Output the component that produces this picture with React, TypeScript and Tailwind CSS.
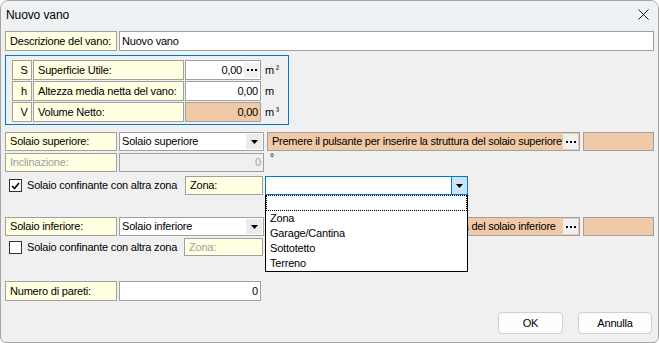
import React from 'react'

const LABEL = 'flex items-center shrink-0 h-full border border-[#a0a0a0] bg-[#ffffe1] pl-[4px] whitespace-nowrap overflow-hidden'
const INPUT = 'flex items-center h-full border border-[#a0a0a0] bg-white'
const ORANGE = 'flex items-center h-full border border-[#a0a0a0] bg-[#f0c9a6]'

function Dots() {
  return (
    <span className="flex items-center justify-center w-[15px] h-[15px] my-auto mr-[1px] bg-[#f0f0f0] shrink-0">
      <svg width="10" height="2" viewBox="0 0 10 2">
        <rect x="0" y="0" width="2" height="2" fill="#000" />
        <rect x="4" y="0" width="2" height="2" fill="#000" />
        <rect x="8" y="0" width="2" height="2" fill="#000" />
      </svg>
    </span>
  )
}

function Arrow() {
  return (
    <svg width="7" height="4" viewBox="0 0 7 4">
      <path d="M0 0H7L3.5 4Z" fill="#000" />
    </svg>
  )
}

function Check({ checked }: { checked?: boolean }) {
  return (
    <span className="flex items-center justify-center w-[13px] h-[13px] border border-[#333333] bg-white shrink-0">
      {checked && (
        <svg width="9" height="8" viewBox="0 0 9 8">
          <path d="M1 4L3.5 6.5L8 1" stroke="#000" strokeWidth="1.6" fill="none" />
        </svg>
      )}
    </span>
  )
}

function SolaioRow({ name }: { name: string }) {
  return (
    <div className="flex h-[19px] gap-[2px]">
      <div className={`${LABEL} w-[112px]`}>{name}:</div>
      <div className={`${INPUT} w-[145px] pl-[2px]`}>
        <span className="flex-1">{name}</span>
        <span className="flex items-center justify-center w-[16px] h-[15px] mr-[1px] bg-[#ececec]">
          <Arrow />
        </span>
      </div>
      <div className={`${ORANGE} w-[313px] ml-[1px]`}>
        <span className="flex-1 pl-[4px] whitespace-nowrap overflow-hidden tracking-[-0.25px]">
          Premere il pulsante per inserire la struttura del {name.toLowerCase()}
        </span>
        <Dots />
      </div>
      <div className={`${ORANGE} flex-1 ml-[1px]`} />
    </div>
  )
}

const ZONE = ['Zona', 'Garage/Cantina', 'Sottotetto', 'Terreno']

export default function App() {
  return (
    <div className="w-[659px] h-[343px] bg-[#f0f0f0] border border-[#a3a3a3] rounded-t-[8px] rounded-b-[6px] overflow-hidden font-['Liberation_Sans',Arial,sans-serif] text-[11px] text-black leading-none select-none">
      <div className="flex items-center justify-between h-[27px] bg-[#eef2f5] pl-[5px] pr-[9px] text-[12px]">
        <span className="tracking-[-0.1px]">Nuovo vano</span>
        <svg width="11" height="11" viewBox="0 0 11 11">
          <path d="M0.5 0.5L10.5 10.5M10.5 0.5L0.5 10.5" stroke="#1b1b1b" strokeWidth="1" />
        </svg>
      </div>

      <div className="flex flex-col px-[4px] tracking-[-0.2px]">
        <div className="flex h-[20px] gap-[2px] mt-[3px]">
          <div className={`${LABEL} w-[112px]`}>Descrizione del vano:</div>
          <div className={`${INPUT} flex-1 pl-[2px]`}>Nuovo vano</div>
        </div>

        <div className="w-[284px] h-[70px] mt-[4px] border border-[#0078d7] pl-[6px] pt-[4px] flex flex-col gap-[1px]">
          {[
            { k: 'S', t: 'Superficie Utile:', u: '²', dots: true },
            { k: 'h', t: 'Altezza media netta del vano:', u: '' },
            { k: 'V', t: 'Volume Netto:', u: '³', ro: true },
          ].map((r) => (
            <div key={r.k} className="flex h-[20px] items-center">
              <div className={`${LABEL} w-[20px] justify-center pl-0`}>{r.k}</div>
              <div className={`${LABEL} w-[151px] ml-[1px]`}>{r.t}</div>
              <div
                className={`flex items-center justify-end h-full w-[76px] ml-[1px] border border-[#a0a0a0] ${
                  r.ro ? 'bg-[#f0c9a6]' : 'bg-white'
                }`}
              >
                <span className="pr-[2px]">0,00</span>
                {r.dots && <Dots />}
              </div>
              <span className="ml-[4px]">
                m{r.u && <span className="ml-[2px] relative top-[-2px] text-[9px]">{r.u}</span>}
              </span>
            </div>
          ))}
        </div>

        <div className="mt-[7px]">
          <SolaioRow name="Solaio superiore" />
        </div>

        <div className="flex h-[19px] gap-[2px] mt-[2px]">
          <div className={`${LABEL} w-[112px] text-[#a0a0a0]`}>Inclinazione:</div>
          <div className="flex items-center justify-end h-full w-[145px] border border-[#a0a0a0] bg-[#f0f0f0] pr-[2px] text-[#a0a0a0]">
            0
          </div>
          <span className="ml-[4px] self-start text-[10px]">°</span>
        </div>

        <div className="flex h-[19px] gap-[2px] mt-[4px] items-center">
          <div className="flex items-center w-[178px] pl-[4px] gap-[5px] whitespace-nowrap">
            <Check checked />
            <span>Solaio confinante con altra zona</span>
          </div>
          <div className={`${LABEL} w-[78px] h-[18px] self-end`}>Zona:</div>
          <div className="relative w-[203px] h-full">
            <div className="flex h-full border border-[#0078d7] bg-white">
              <span className="flex-1" />
              <span className="flex items-center justify-center w-[16px] h-full bg-[#cce4f7] border-l border-[#0078d7]">
                <Arrow />
              </span>
            </div>
            <div className="absolute left-0 top-full w-[203px] border border-t-0 border-black bg-white z-10">
              <div className="h-[16px] border border-dotted border-black" />
              {ZONE.map((z) => (
                <div key={z} className="h-[15px] flex items-center pl-[4px]">
                  {z}
                </div>
              ))}
            </div>
          </div>
        </div>

        <div className="mt-[22px]">
          <SolaioRow name="Solaio inferiore" />
        </div>

        <div className="flex h-[18px] gap-[1px] mt-[2px] items-center">
          <div className="flex items-center w-[178px] pl-[4px] gap-[5px] whitespace-nowrap">
            <Check />
            <span>Solaio confinante con altra zona</span>
          </div>
          <div className={`${LABEL} w-[79px] text-[#a0a0a0]`}>Zona:</div>
        </div>

        <div className="flex h-[20px] gap-[2px] mt-[25px]">
          <div className={`${LABEL} w-[112px]`}>Numero di pareti:</div>
          <div className={`${INPUT} w-[142px] justify-end pr-[2px]`}>0</div>
        </div>

        <div className="flex justify-end gap-[15px] mt-[11px] pr-[2px]">
          <button className="w-[65px] h-[22px] rounded-[4px] border border-[#d0d0d0] bg-[#fdfdfd] text-[11px]">OK</button>
          <button className="w-[74px] h-[22px] rounded-[4px] border border-[#d0d0d0] bg-[#fdfdfd] text-[11px]">Annulla</button>
        </div>
      </div>
    </div>
  )
}
